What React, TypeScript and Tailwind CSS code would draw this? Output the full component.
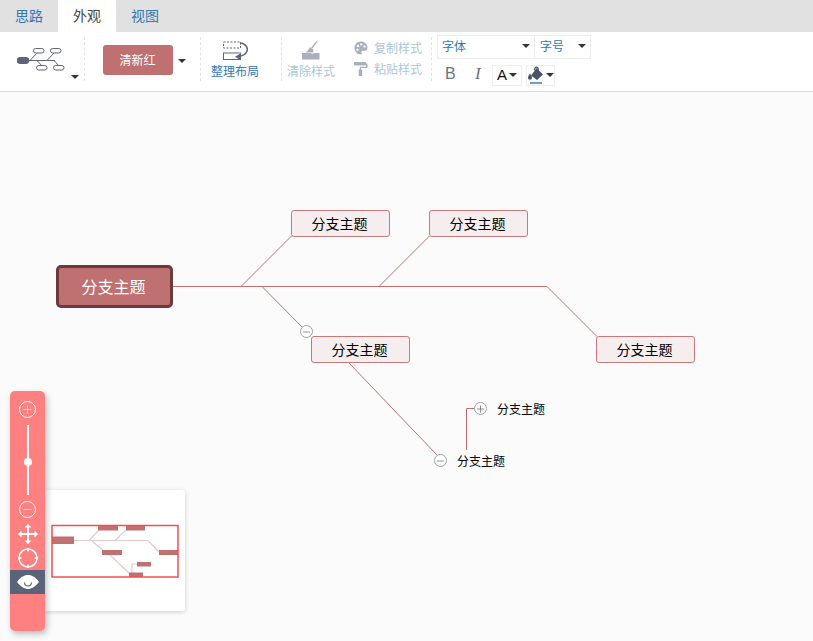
import { Plus, Minus } from "lucide-react";

const font = { fontFamily: '"Noto Sans CJK SC", "Liberation Sans", sans-serif' };

function Caret({ className = "" }: { className?: string }) {
  return <span className={`block h-0 w-0 border-x-[4px] border-t-[4px] border-x-transparent border-t-[#333] ${className}`} />;
}

function Tab({ label, active }: { label: string; active?: boolean }) {
  return (
    <div className={`flex h-8 w-[58px] items-center justify-center pb-[2px] text-sm ${active ? "bg-white text-[#444]" : "text-[#2f78b4]"}`}>
      {label}
    </div>
  );
}

function StructureIcon() {
  return (
    <svg width="48" height="24" viewBox="0 0 48 24" fill="none" stroke="#5f6478" strokeWidth="1">
      <path d="M12 13.500H38M13 13.500 20 6M30 13.500 37 6M20 13.500 25 19M37 13.500 42 19" />
      <rect x="0" y="10.500" width="12" height="6" rx="3" fill="#5f6478" />
      <rect x="16.500" y="1.500" width="10.500" height="4.500" rx="2.200" fill="#fff" />
      <rect x="33.500" y="1.500" width="10.500" height="4.500" rx="2.200" fill="#fff" />
      <rect x="19.500" y="18.500" width="10.500" height="4.500" rx="2.200" fill="#fff" />
      <rect x="36.500" y="18.500" width="10.500" height="4.500" rx="2.200" fill="#fff" />
    </svg>
  );
}

function LayoutIcon() {
  return (
    <svg width="26" height="20" viewBox="0 0 26 20" fill="none" stroke="#5f6478" strokeWidth="1">
      <rect x="1.500" y="1" width="17" height="6" strokeDasharray="2 1.500" />
      <rect x="1.500" y="12" width="17" height="6.500" />
      <path d="M18 2C24 2.500 26 7 25 10 24 13 21 15 16 15.500" strokeWidth="1.500" />
      <path d="M18.500 12.500V19L13 15.700z" fill="#5f6478" stroke="none" />
    </svg>
  );
}

function BroomIcon() {
  return (
    <svg width="18" height="19" viewBox="0 0 18 19" fill="#a9b0bc">
      <path d="M14.500 0 15.500.8 10.500 7.500 9.200 6.600z" />
      <path d="M7.800 6 11.500 8.700 11 11.500H3.500C5.500 10.500 7 8.500 7.800 6z" />
      <path d="M0 12H8.500C9.500 13 11 13 12.500 12H17.500V18.500H0z" />
    </svg>
  );
}

function PaletteIcon() {
  return (
    <svg width="14" height="14" viewBox="0 0 14 14" fill="#a9b0bc">
      <path d="M7 .5C3 .5.500 3.500.500 7S3.200 13.500 6.500 13.500c1.500 0 1.500-1.200 1-2-.5-1 .2-1.800 1.300-1.800h2.200c1.700 0 2.500-1.300 2.500-3C13.500 3 10.500.5 7 .5z" />
      <circle cx="4" cy="5" r="1.200" fill="#fff" />
      <circle cx="7.300" cy="3.400" r="1.200" fill="#fff" />
      <circle cx="10.500" cy="5.500" r="1.200" fill="#fff" />
      <circle cx="3.500" cy="8.800" r="1.200" fill="#fff" />
    </svg>
  );
}

function RollerIcon() {
  return (
    <svg width="14" height="14" viewBox="0 0 14 14" fill="#a9b0bc">
      <rect x="0" y="0" width="12" height="3.500" />
      <path d="M12 1.500h1.500V6H7V8H5.800V4.800h6.200z" />
      <rect x="4.700" y="7.500" width="3.500" height="6.500" />
    </svg>
  );
}

function FillIcon() {
  return (
    <svg width="16" height="18" viewBox="0 0 16 18" fill="#4b5268">
      <path d="M8.500 2 15 8.500 9 14 3 9.500 6.500 5z" />
      <path d="M6 4.500C6 1.500 7 .5 8.500 .5S11 1.500 11 5H9.800C9.800 2.500 9.300 1.700 8.500 1.700S7.200 2.500 7.200 4.500z" />
      <path d="M2 7.500C.8 9.500 0 10.500 0 11.800a2 2 0 0 0 4 0c0-1.300-.8-2.300-2-4.300z" />
      <rect x="2" y="16" width="12" height="2" fill="#6ba0c6" />
    </svg>
  );
}

function EyeIcon() {
  return (
    <svg width="22" height="14" viewBox="0 0 22 14">
      <path d="M0 7C4 1.500 8 0 11 0S18 1.500 22 7C18 12 14 14 11 14S4 12 0 7z" fill="#fff" />
      <path d="M7.500 7.500a3.500 3.500 0 0 0 7 0" fill="none" stroke="#5a6378" strokeWidth="1.200" />
    </svg>
  );
}

function Topic({ className }: { className: string }) {
  return (
    <div className={`absolute flex h-[27px] w-[99px] items-center justify-center rounded-[3px] border border-[#c87a7a] bg-[#f6eeee] pb-[2px] pr-[2px] text-sm text-black ${className}`}>
      分支主题
    </div>
  );
}

function Toggle({ className, plus }: { className: string; plus?: boolean }) {
  return (
    <div className={`absolute flex size-[13px] items-center justify-center rounded-full border-[1.500px] border-[#a0a0a0] bg-white text-[#555] ${className}`}>
      {plus ? <Plus size={12} strokeWidth={1.4} /> : <Minus size={12} strokeWidth={1.4} />}
    </div>
  );
}

function Minimap() {
  return (
    <svg width="140" height="121" viewBox="45 490 140 121" fill="none">
      <g stroke="#e6caca" strokeWidth="1.200">
        <path d="M74 540.500H148L159 552M89 540.500 100 529M115 540.500 127 529M92 541 105 552M110 555 130 574M132 573V564H138" />
      </g>
      <g fill="#bf7070">
        <rect x="52" y="536.500" width="22" height="7.500" />
        <rect x="98" y="525.500" width="20" height="5" />
        <rect x="126" y="525.500" width="19" height="5" />
        <rect x="102" y="550" width="20" height="5" />
        <rect x="159" y="550" width="19" height="5" />
        <rect x="137" y="562" width="14" height="4.500" />
        <rect x="129" y="572.500" width="14" height="4.500" />
      </g>
      <rect x="52" y="525.500" width="126" height="51.500" stroke="#f44f4f" strokeWidth="1.500" />
    </svg>
  );
}

export default function App() {
  return (
    <div className="flex h-[641px] w-[813px] flex-col overflow-hidden bg-[#fbfbfb]" style={font}>
      <div className="flex h-8 shrink-0 bg-[#e1e1e1]">
        <Tab label="思路" />
        <Tab label="外观" active />
        <Tab label="视图" />
      </div>

      <div className="flex h-[60px] shrink-0 border-b border-[#dedede] bg-white">
        <div className="relative mt-[5px] h-[44px] w-[85px] border-r border-dashed border-[#e4e4e4] pl-[17px] pt-[10px]">
          <StructureIcon />
          <Caret className="absolute left-[71px] top-[38px]" />
        </div>

        <div className="mt-[5px] flex h-[44px] w-[116px] border-r border-dashed border-[#e4e4e4] pl-[18px] pt-[8px]">
          <div className="flex h-[30px] w-[70px] items-center justify-center rounded-[3px] bg-[#bf7070] pr-[1px] text-xs text-white">清新红</div>
          <Caret className="ml-[5px] mt-[14px]" />
        </div>

        <div className="mt-[5px] flex h-[44px] w-[81px] flex-col items-center border-r border-dashed border-[#e4e4e4] pr-[12px] pt-[4px] text-xs text-[#2f78b4]">
          <LayoutIcon />
          <span className="mt-[2px] leading-[16px]">整理布局</span>
        </div>

        <div className="mt-[5px] flex h-[44px] w-[150px] border-r border-dashed border-[#e4e4e4] pl-[5px] text-xs text-[#a9c6de]">
          <div className="flex w-[48px] flex-col items-center pt-[4px]">
            <BroomIcon />
            <span className="mt-[3px] leading-[16px]">清除样式</span>
          </div>
          <div className="ml-[19px] flex flex-col gap-[5px] pt-[3px]">
            <div className="flex h-[16px] items-center gap-[6px]"><PaletteIcon />复制样式</div>
            <div className="flex h-[16px] items-center gap-[6px]"><RollerIcon />粘贴样式</div>
          </div>
        </div>

        <div className="ml-[5px] flex flex-col pt-[3px] text-xs text-[#2f78b4]">
          <div className="flex">
            <div className="flex h-6 w-[98px] items-center justify-between border border-[#eeeeee] pb-[2px] pl-[4px] pr-[4px]">字体<Caret /></div>
            <div className="flex h-6 w-[56px] items-center justify-between border border-l-0 border-[#eeeeee] pb-[2px] pl-[5px] pr-[4px]">字号<Caret /></div>
          </div>
          <div className="mt-[3px] flex items-center">
            <span className="w-[26px] pb-[2px] pl-[8px] text-base text-[#6b7280]" style={{ fontFamily: '"Liberation Sans", sans-serif' }}>B</span>
            <span className="w-[29px] pb-[2px] pl-[12px] text-[17px] italic text-[#6b7280]" style={{ fontFamily: '"Liberation Serif", serif' }}>I</span>
            <div className="flex h-[21px] w-[30px] items-center justify-center gap-[2px] border border-[#eeeeee] text-[15px] text-[#111]" style={{ fontFamily: '"Liberation Sans", sans-serif' }}>A<Caret /></div>
            <div className="ml-[4px] flex h-[21px] w-[29px] items-center justify-center gap-[2px] border border-[#eeeeee]"><FillIcon /><Caret /></div>
          </div>
        </div>
      </div>

      <div className="relative flex-1">
        {/* lines of the map, y is offset by the 92px header */}
        <svg className="absolute inset-0" width="813" height="549" viewBox="0 92 813 549" fill="none" stroke="#c26f6f">
          <path d="M173 286.500H547L597 336.500M241.500 286 291.500 236M379.500 286 429.500 236M262.500 287 302 327M349 363 437 455M466.500 450V408.500H474" />
        </svg>

        <div className="absolute left-[56px] top-[173px] flex h-[43px] w-[117px] items-center justify-center rounded-[5px] border-[3px] border-[#6b3a3d] bg-[#bf7070] pb-[2px] pr-[2px] text-base text-white">
          分支主题
        </div>
        <Topic className="left-[291px] top-[118px]" />
        <Topic className="left-[429px] top-[118px]" />
        <Topic className="left-[311px] top-[244px]" />
        <Topic className="left-[596px] top-[244px]" />
        <Toggle className="left-[300px] top-[233px]" />
        <Toggle className="left-[474px] top-[310px]" plus />
        <Toggle className="left-[434px] top-[362px]" />
        <span className="absolute left-[497px] top-[308px] text-xs leading-[18px] text-black">分支主题</span>
        <span className="absolute left-[457px] top-[360px] text-xs leading-[18px] text-black">分支主题</span>

        <div className="absolute left-[45px] top-[398px] h-[121px] w-[140px] rounded-r-[3px] bg-white shadow-[0_1px_5px_rgba(0,0,0,0.18)]">
          <Minimap />
        </div>

        <div className="absolute left-[10px] top-[299px] flex h-[240px] w-[35px] flex-col items-center rounded-[5px] bg-[#ff8080] text-white shadow-[2px_3px_6px_rgba(0,0,0,0.25)]">
          <div className="mt-[10px] flex size-[17px] items-center justify-center rounded-full border-[1.500px] border-white"><Plus size={13} strokeWidth={1.2} /></div>
          <div className="relative mt-[7px] h-[70px] w-[2px] bg-white">
            <span className="absolute left-[-3px] top-[33px] size-2 rounded-full bg-white" />
          </div>
          <div className="mt-[6px] flex size-[17px] items-center justify-center rounded-full border-[1.500px] border-white"><Minus size={13} strokeWidth={1.2} /></div>
          <svg className="mt-[6px]" width="20" height="20" viewBox="0 0 20 20" fill="none" stroke="#fff" strokeWidth="2">
            <path d="M10 1v18M1 10h18" />
            <path d="M7.500 3.500 10 1l2.500 2.500M7.500 16.500 10 19l2.500-2.500M3.500 7.500 1 10l2.500 2.500M16.500 7.500 19 10l-2.500 2.500" strokeWidth="1.500" />
          </svg>
          <svg className="mt-[4px]" width="20" height="20" viewBox="0 0 20 20" fill="none" stroke="#fff" strokeWidth="1.500">
            <circle cx="10" cy="10" r="9" />
            <path d="M10 0v3.500M10 16.500v3.500M0 10h3.500M16.500 10h3.500" />
          </svg>
          <div className="mt-[2px] flex h-[24px] w-full items-center justify-center bg-[#5a6378]"><EyeIcon /></div>
        </div>
      </div>
    </div>
  );
}
